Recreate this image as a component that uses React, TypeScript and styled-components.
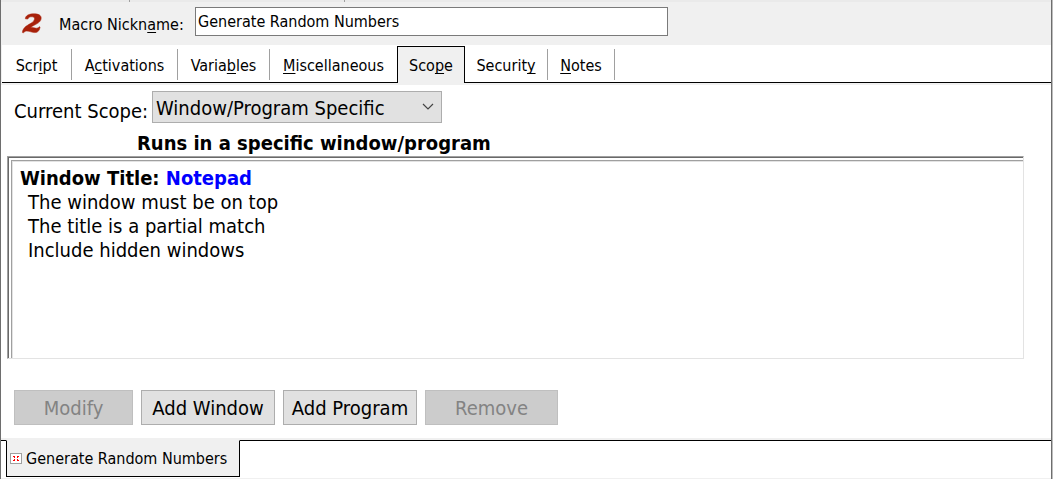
import React, { useState } from "react";
import styled, { createGlobalStyle } from "styled-components";

const GlobalStyle = createGlobalStyle`
  *, *::before, *::after { box-sizing: border-box; }
  body {
    margin: 0;
    background: #fff;
    color: #000;
    font-family: Tahoma, "DejaVu Sans Condensed", sans-serif;
    font-size: 16px;
    line-height: 20px;
  }
  button, input, select { font: inherit; color: inherit; margin: 0; }
  u { text-underline-offset: 2px; text-decoration-thickness: 1px; text-decoration-skip-ink: none; }
`;

const Window = styled.div`
  display: flex;
  flex-direction: column;
  min-height: 100vh;
  border-left: 1px solid #6e6e6e;
  border-right: 1px solid #bdbdbd;
  box-shadow: inset -1px 0 #6e6e6e;
  padding-right: 1px;
  overflow: hidden;
`;

const ToolbarEdge = styled.div`
  display: flex;
  height: 2px;
  background: #eaeaea;
`;

const ToolbarCell = styled.span<{ $width: number }>`
  width: ${(p) => p.$width}px;
  border-right: 1px solid #a0a0a0;
`;

const Header = styled.header`
  display: flex;
  align-items: flex-start;
  height: 43px;
  padding: 5px 16px 0 20px;
  background: #f0f0f0;
`;

const Logo = styled.svg`
  flex: none;
  width: 22px;
  height: 22px;
  margin: 5px 16px 0 0;
`;

const NameLabel = styled.label`
  width: 136px;
  padding-top: 8px;
  white-space: nowrap;
`;

const NameInput = styled.input`
  flex: 0 1 473px;
  min-width: 0;
  height: 29px;
  padding: 0 2px 1px;
  border: 1px solid #7a7a7a;
  border-radius: 0;
  background: #fff;
  outline: none;
`;

const TabStrip = styled.div`
  display: flex;
  align-items: flex-end;
  height: 40px;
  padding-top: 1px;
  border-left: 1px solid #f0f0f0;
  border-bottom: 2px solid #f0f0f0;
  box-shadow: inset 0 -1px #000;
`;

const Tab = styled.button<{ $width: number; $active?: boolean }>`
  display: flex;
  justify-content: center;
  width: ${(p) => p.$width}px;
  height: ${(p) => (p.$active ? 37 : 34)}px;
  padding: ${(p) => (p.$active ? 10 : 7)}px 0 0;
  border: 0;
  background: ${(p) => (p.$active ? "#f0f0f0" : "none")};
  box-shadow: ${(p) => (p.$active ? "inset 1px 1px #000, inset -1px 0 #000" : "none")};
  white-space: nowrap;
`;

const TabDivider = styled.span`
  align-self: flex-start;
  width: 1px;
  height: 31px;
  margin-top: 3px;
  background: #a0a0a0;
`;

const Panel = styled.main`
  display: flex;
  flex: 1;
  flex-direction: column;
  padding: 6px 27px 13px 6px;
  font-size: 20px;
  line-height: 24px;
`;

const ScopeRow = styled.div`
  display: flex;
  align-items: flex-start;
  padding-left: 7px;
`;

const ScopeLabel = styled.label`
  width: 138px;
  padding-top: 8px;
  white-space: nowrap;
`;

const SelectBox = styled.div`
  display: grid;
  width: 290px;
  height: 32px;
  align-items: center;

  > * { grid-area: 1 / 1; }
`;

const Select = styled.select`
  appearance: none;
  width: 100%;
  height: 100%;
  padding: 1px 24px 0 3px;
  border: 1px solid #adadad;
  border-radius: 0;
  background: #e1e1e1;
`;

const Chevron = styled.svg`
  justify-self: end;
  width: 12px;
  height: 8px;
  margin-right: 8px;
  pointer-events: none;
`;

const Heading = styled.h1`
  margin: 8px 0 0 130px;
  font-size: 20px;
  line-height: 24px;
`;

const ListFrame = styled.section`
  display: flex;
  flex: 1;
  min-height: 203px;
  margin-top: 1px;
  border: 1px solid;
  border-color: #a0a0a0 #e3e3e3 #e3e3e3 #a0a0a0;
  box-shadow: inset 1px 1px #696969;
  padding: 3px 0 0 3px;
`;

const ListBody = styled.div`
  flex: 1;
  padding: 5px 8px;
  border-top: 1px solid #a0a0a0;
  border-left: 1px solid #a0a0a0;
  box-shadow: inset 1px 1px #e3e3e3;
`;

const RuleTitle = styled.h2`
  margin: 0;
  font-size: 20px;
  line-height: 24px;
`;

const RuleTarget = styled.span`
  color: #0000ff;
`;

const RuleList = styled.ul`
  margin: 0;
  padding: 0 0 0 8px;
  list-style: none;
`;

const Actions = styled.div`
  display: flex;
  gap: 8px;
  padding: 31px 0 0 7px;
`;

const ActionButton = styled.button<{ $width: number }>`
  width: ${(p) => p.$width}px;
  height: 35px;
  padding: 1px 0 0;
  border: 1px solid #adadad;
  border-radius: 0;
  background: #e1e1e1;
  white-space: nowrap;

  &:disabled {
    border-color: #bfbfbf;
    background: #cccccc;
    color: #838383;
  }
`;

const BottomStrip = styled.footer`
  height: 41px;
  padding-left: 5px;
  border-top: 2px solid #f0f0f0;
  border-bottom: 1px solid #f0f0f0;
  box-shadow: inset 0 1px #000;
`;

const BottomTab = styled.button`
  display: flex;
  align-items: center;
  gap: 4px;
  width: 234px;
  height: 37px;
  padding: 0 0 0 3px;
  border: 1px solid #000;
  border-top-color: #f0f0f0;
  background: #f0f0f0;
  white-space: nowrap;
`;

const CloseIcon = styled.svg`
  flex: none;
  width: 12px;
  height: 11px;
`;

const TABS = [
  { before: "Scr", key: "i", after: "pt", width: 69 },
  { before: "A", key: "c", after: "tivations", width: 105 },
  { before: "Varia", key: "b", after: "les", width: 91 },
  { before: "", key: "M", after: "iscellaneous", width: 127 },
  { before: "Sco", key: "p", after: "e", width: 68 },
  { before: "Securit", key: "y", after: "", width: 82 },
  { before: "", key: "N", after: "otes", width: 66 },
];

const RULES = ["The window must be on top", "The title is a partial match", "Include hidden windows"];

export default function App() {
  const [nickname, setNickname] = useState("Generate Random Numbers");
  const active = 4;

  return (
    <Window>
      <GlobalStyle />
      <ToolbarEdge>
        <ToolbarCell $width={129} />
        <ToolbarCell $width={215} />
      </ToolbarEdge>
      <Header>
        <Logo viewBox="0 0 22 22" aria-hidden="true">
          <path
            d="M4.300 6.800C4.600 3.400 8 1.800 13 1.800c4.600 0 7.200 1.500 7.200 4.300 0 3-2.400 4.900-6.200 6.700-2 1-3.500 1.900-4.600 2.900 2.400-.500 4 .600 6.300.500 1.300-.100 2-.700 2.600-1.500l.800.400c-.600 3.600-2.200 5.500-5.200 5.500-3.100 0-5-1.500-8-1.500-1.600 0-2.300.600-3.300 1.600L1.400 20.600c.300-4.700 4.100-6.700 7.900-9 3-1.800 4.200-3.100 4.200-4.900 0-1.300-1-1.900-2.700-1.900-2 0-3.200.500-4.100 2.300z"
            fill="#a8210a"
            stroke="#a8210a"
            strokeWidth=".5"
          />
        </Logo>
        <NameLabel htmlFor="nickname">
          Macro Nickn<u>a</u>me:
        </NameLabel>
        <NameInput id="nickname" value={nickname} onChange={(e) => setNickname(e.target.value)} />
      </Header>
      <TabStrip role="tablist">
        {TABS.map((tab, i) => (
          <React.Fragment key={tab.key}>
            <Tab role="tab" aria-selected={i === active} $active={i === active} $width={tab.width}>
              <span>
                {tab.before}
                <u>{tab.key}</u>
                {tab.after}
              </span>
            </Tab>
            {i !== active && i + 1 !== active && <TabDivider />}
          </React.Fragment>
        ))}
      </TabStrip>
      <Panel>
        <ScopeRow>
          <ScopeLabel htmlFor="scope">Current Scope:</ScopeLabel>
          <SelectBox>
            <Select id="scope" defaultValue="specific">
              <option value="specific">Window/Program Specific</option>
              <option value="global">Global</option>
            </Select>
            <Chevron viewBox="0 0 12 8" aria-hidden="true">
              <path d="M1 1l5 5 5-5" fill="none" stroke="#444" strokeWidth="1.2" />
            </Chevron>
          </SelectBox>
        </ScopeRow>
        <Heading>Runs in a specific window/program</Heading>
        <ListFrame>
          <ListBody>
            <RuleTitle>
              Window Title: <RuleTarget>Notepad</RuleTarget>
            </RuleTitle>
            <RuleList>
              {RULES.map((rule) => (
                <li key={rule}>{rule}</li>
              ))}
            </RuleList>
          </ListBody>
        </ListFrame>
        <Actions>
          <ActionButton $width={119} disabled>Modify</ActionButton>
          <ActionButton $width={134}>Add Window</ActionButton>
          <ActionButton $width={134}>Add Program</ActionButton>
          <ActionButton $width={133} disabled>Remove</ActionButton>
        </Actions>
      </Panel>
      <BottomStrip>
        <BottomTab>
          <CloseIcon viewBox="0 0 12 11" aria-hidden="true" shapeRendering="crispEdges">
            <path d="M.5.5h11v10H.5z" fill="#fff" stroke="#a0a0a0" />
            <path
              d="M3 3h1v1H3zM4 3h1v2H4zM7 3h1v2H7zM8 3h1v1H8zM4 6h1v2H4zM3 7h1v1H3zM7 6h1v2H7zM8 7h1v1H8z"
              fill="#f00"
            />
          </CloseIcon>
          Generate Random Numbers
        </BottomTab>
      </BottomStrip>
    </Window>
  );
}
